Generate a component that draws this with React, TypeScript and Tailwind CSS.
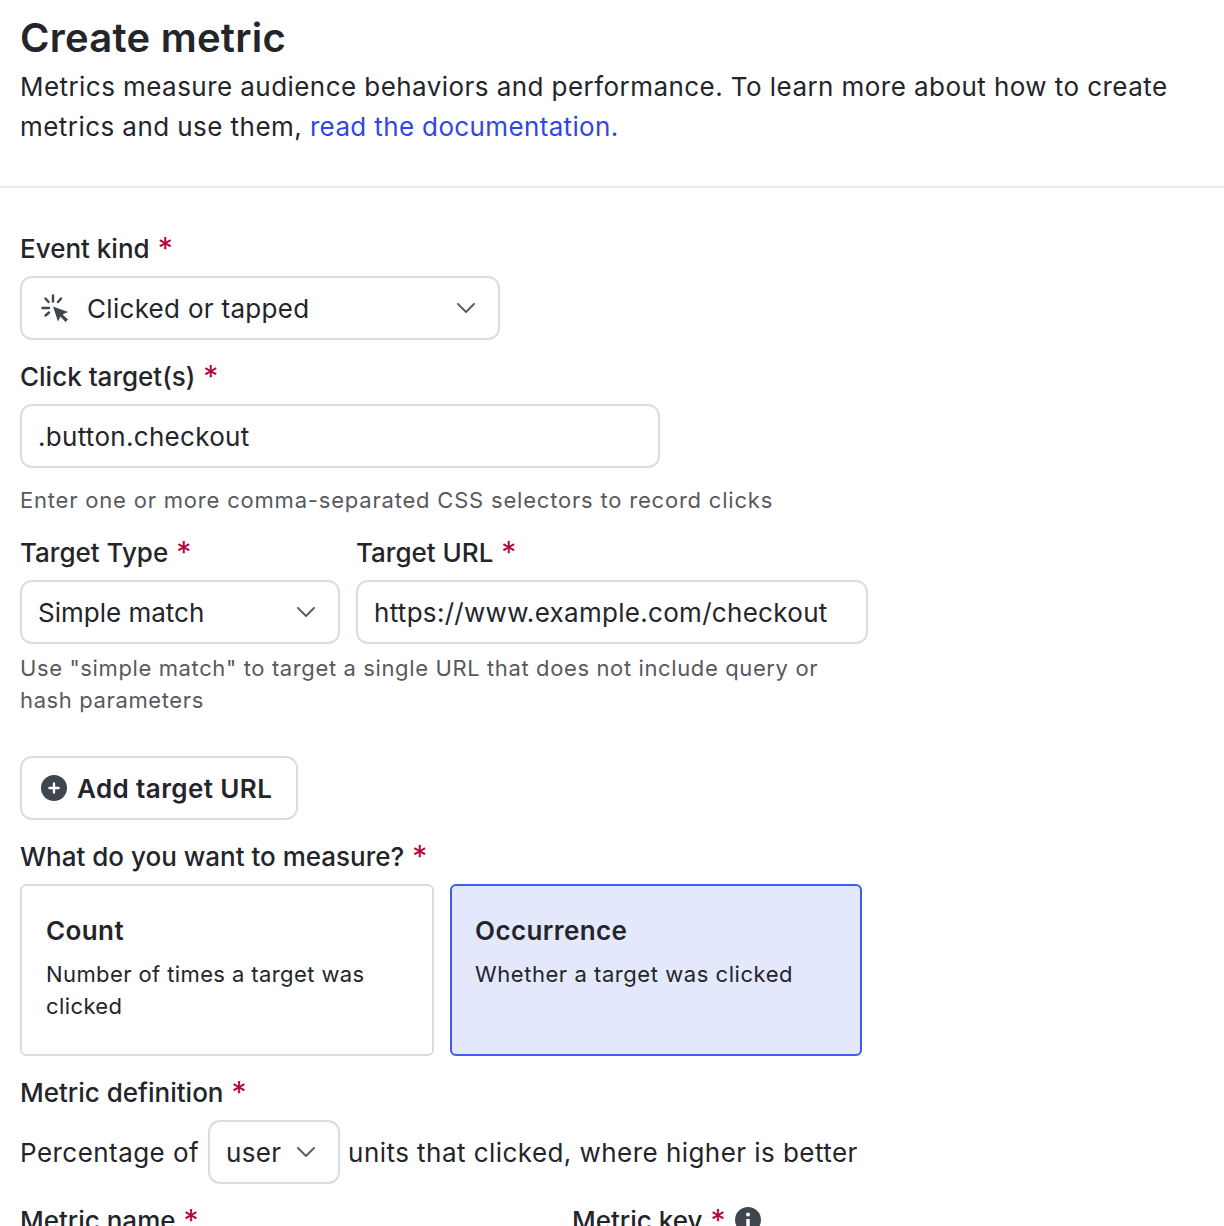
import React from 'react';

const Chevron = () => (
  <svg width="20" height="12" viewBox="0 0 20 12" fill="none" className="shrink-0">
    <path d="M2 2l8 8 8-8" stroke="#58606b" strokeWidth="2" strokeLinecap="round" strokeLinejoin="round" />
  </svg>
);

const Label = ({ text }: { text: string }) => (
  <div className="h-10 flex items-center pt-px text-[26px] leading-10 font-[450] text-[#23252b]">
    <span>{text}</span>
    <span className="ml-[8px] text-[30px] font-normal text-[#b8003f] -mt-px">*</span>
  </div>
);

const Help = ({ children }: { children: React.ReactNode }) => (
  <p className="text-[22px] leading-8 tracking-[0.8px] text-[#58595f]">{children}</p>
);

const boxClass =
  'h-16 flex items-center border-2 border-[#d8dde3] rounded-[12px] bg-white text-[26px] tracking-[0.3px] text-[#23252b]';

export default function App() {
  return (
    <div className="h-[1226px] overflow-hidden bg-white font-['Inter',sans-serif]">
      <div className="px-5 pt-[14px] pb-[39px] border-b-2 border-[#ebebed]">
        <h1 className="text-[40px] leading-[48px] font-semibold tracking-[0.25px] text-[#23252b]">Create metric</h1>
        <p className="mt-[5px] text-[26px] leading-10 tracking-[0.44px] text-[#23252b]">
          Metrics measure audience behaviors and performance. To learn more about how to create metrics and use them,{' '}
          <span className="text-[#3147e0] tracking-[0.36px]">read the documentation.</span>
        </p>
      </div>

      <div className="px-5 pt-10">
        <Label text="Event kind" />
        <div className={`${boxClass} w-[480px] mt-2 pl-[18px] pr-[22px]`}>
          <svg width="30" height="30" viewBox="0 0 30 30" fill="none" className="shrink-0 mr-[17px]">
            <path
              d="M13 2.5v6M5.5 5.5l3 3.5M21 5.5l-3 3.5M2.5 15h6.5M5.5 22.5l3.5-3"
              stroke="#3f4650"
              strokeWidth="2.4"
              strokeLinecap="round"
            />
            <path d="M13 13.5l15 5.5-5.5 2.5 5.5 5-2.5 2.5-5-5.500-2.500 5z" fill="#3f4650" />
          </svg>
          <span className="flex-1">Clicked or tapped</span>
          <Chevron />
        </div>

        <div className="mt-4">
          <Label text="Click target(s)" />
        </div>
        <div className={`${boxClass} w-[640px] mt-2 px-[16px]`}>.button.checkout</div>
        <div className="mt-4">
          <Help>Enter one or more comma-separated CSS selectors to record clicks</Help>
        </div>

        <div className="flex gap-4 mt-4">
          <div className="w-80">
            <Label text="Target Type" />
            <div className={`${boxClass} mt-2 pl-4 pr-[22px]`}>
              <span className="flex-1 tracking-[0px]">Simple match</span>
              <Chevron />
            </div>
          </div>
          <div className="w-[512px]">
            <Label text="Target URL" />
            <div className={`${boxClass} mt-2 px-4`}>https://www.example.com/checkout</div>
          </div>
        </div>
        <div className="mt-2 w-[832px]">
          <Help>
            <span className="tracking-[0.62px]">
              Use "simple match" to target a single URL that does not include query or hash parameters
            </span>
          </Help>
        </div>

        <button className="mt-10 h-16 w-[278px] flex items-center gap-[10px] pl-[19px] border-2 border-[#d8dde3] rounded-[12px] bg-white text-[26px] font-semibold tracking-[0.4px] text-[#23252b]">
          <svg width="26" height="26" viewBox="0 0 26 26" className="shrink-0">
            <circle cx="13" cy="13" r="13" fill="#3f4650" />
            <path d="M13 8.500v9M8.500 13h9" stroke="#fff" strokeWidth="2.4" strokeLinecap="round" />
          </svg>
          Add target URL
        </button>

        <div className="mt-4">
          <Label text="What do you want to measure?" />
        </div>
        <div className="flex gap-4 mt-2">
          <div className="w-[414px] h-[172px] border-2 border-[#d8dde3] rounded-[6px] pl-6 pr-6 pt-[25px]">
            <div className="text-[26px] leading-10 font-semibold tracking-[0.4px] text-[#23252b]">Count</div>
            <div className="mt-[7px] text-[22px] leading-8 tracking-[0.4px] text-[#23252b]">
              Number of times a target was clicked
            </div>
          </div>
          <div className="w-[412px] h-[172px] border-2 border-[#405bf0] bg-[#e3e8fd] rounded-[6px] pl-[23px] pr-6 pt-[25px]">
            <div className="text-[26px] leading-10 font-semibold tracking-[0.4px] text-[#23252b]">Occurrence</div>
            <div className="mt-[7px] text-[22px] leading-8 tracking-[0.55px] text-[#23252b]">
              Whether a target was clicked
            </div>
          </div>
        </div>

        <div className="mt-4">
          <Label text="Metric definition" />
        </div>
        <div className="flex items-center mt-2 text-[26px] tracking-[0.45px] text-[#23252b]">
          <span>Percentage of</span>
          <div className={`${boxClass} w-[132px] ml-[9px] pl-4 pr-[22px]`}>
            <span className="flex-1">user</span>
            <Chevron />
          </div>
          <span className="ml-2">units that clicked, where higher is better</span>
        </div>

        <div className="flex mt-4">
          <div className="w-[552px]">
            <Label text="Metric name" />
          </div>
          <div className="flex items-center gap-[10px]">
            <Label text="Metric key" />
            <svg width="26" height="26" viewBox="0 0 26 26" className="shrink-0">
              <circle cx="13" cy="13" r="13" fill="#3f4650" />
              <circle cx="13" cy="7.500" r="2" fill="#fff" />
              <path d="M13 12v8" stroke="#fff" strokeWidth="3.4" />
            </svg>
          </div>
        </div>
      </div>
    </div>
  );
}
